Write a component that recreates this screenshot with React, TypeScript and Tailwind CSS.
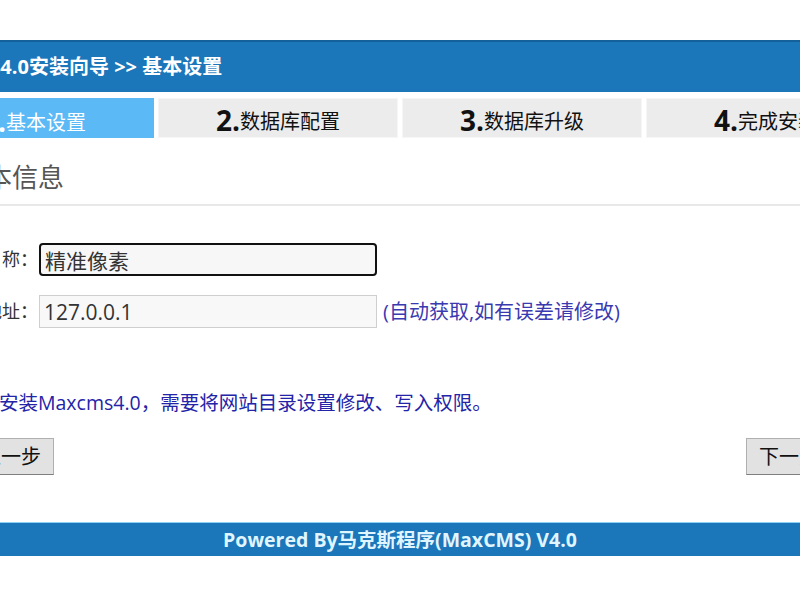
const font = "font-['Open_Sans','Noto_Sans_CJK_SC',sans-serif]";

const steps = [
  { num: "1.", label: "基本设置", active: true },
  { num: "2.", label: "数据库配置", active: false },
  { num: "3.", label: "数据库升级", active: false },
  { num: "4.", label: "完成安装", active: false },
];

export default function App() {
  return (
    <div className={`w-[800px] h-[600px] overflow-hidden bg-white ${font}`}>
      <div className="ml-[-86px] w-[972px] pt-[40px]">
        {/* title bar */}
        <div className="h-[52px] bg-[#1b76ba] border-t-2 border-[#14609a] flex items-center pl-[4px]">
          <span className="text-white font-bold text-[20px] whitespace-nowrap">
            Maxcms4.0安装向导 &gt;&gt; 基本设置
          </span>
        </div>

        {/* steps */}
        <div className="mt-[6px] flex gap-[4px]">
          {steps.map((s) => (
            <div
              key={s.num}
              className={`w-[240px] h-[40px] flex items-end justify-center pb-[1px] ${
                s.active ? "bg-[#5bb9f6] text-white" : "bg-[#ececec] text-[#111] border border-[#f6f6f6]"
              }`}
            >
              <span className="text-[28px] font-bold leading-[32px]">{s.num}</span>
              <span className="text-[20px] leading-[28px]">{s.label}</span>
            </div>
          ))}
        </div>

        {/* section heading */}
        <div className="mt-[20px] pl-[46px] pb-[8px] border-b-2 border-[#e8e8e8]">
          <h2 className="text-[26px] leading-[38px] text-[#555]">基本信息</h2>
        </div>

        {/* form */}
        <div className="mt-[37px] flex flex-col gap-[19px]">
          <div className="flex items-center">
            <label className="w-[124px] text-right text-[18px] text-[#333] whitespace-nowrap">网站名称：</label>
            <input
              defaultValue="精准像素"
              className="w-[338px] h-[33px] ml-[1px] px-[4px] rounded-[4px] border-2 border-[#111] bg-[#f7f7f7] text-[21px] text-[#333] outline-none"
            />
          </div>
          <div className="flex items-center">
            <label className="w-[124px] text-right text-[18px] text-[#333] whitespace-nowrap">网站地址：</label>
            <input
              defaultValue="127.0.0.1"
              className="w-[338px] h-[33px] ml-[1px] px-[4px] border border-[#cfcfcf] bg-[#f8f8f8] text-[21px] text-[#333] outline-none"
            />
            <span className="ml-[6px] text-[20px] text-[#3a3ab0] whitespace-nowrap">(自动获取,如有误差请修改)</span>
          </div>
        </div>

        {/* note */}
        <p className="mt-[60px] pl-[46px] text-[19.5px] text-[#2424a8] whitespace-nowrap">
          请在安装Maxcms4.0，需要将网站目录设置修改、写入权限。
        </p>

        {/* buttons */}
        <div className="mt-[21px] px-[54px] flex justify-between">
          <button className="h-[37px] px-[12px] text-[20px] text-[#111] bg-[#e2e2e2] border border-[#b0b0b0] border-b-[#7f7f7f]">
            上一步
          </button>
          <button className="h-[37px] px-[12px] text-[20px] text-[#111] bg-[#e2e2e2] border border-[#b0b0b0] border-b-[#7f7f7f]">
            下一步
          </button>
        </div>

        {/* footer */}
        <div className="mt-[47px] h-[34px] bg-[#1b76ba] border-t border-[#8fd0f5] flex items-center justify-center">
          <span className="text-[19.5px] font-bold text-[#dff5ff] whitespace-nowrap">
            Powered By马克斯程序(MaxCMS) V4.0
          </span>
        </div>
      </div>
    </div>
  );
}
